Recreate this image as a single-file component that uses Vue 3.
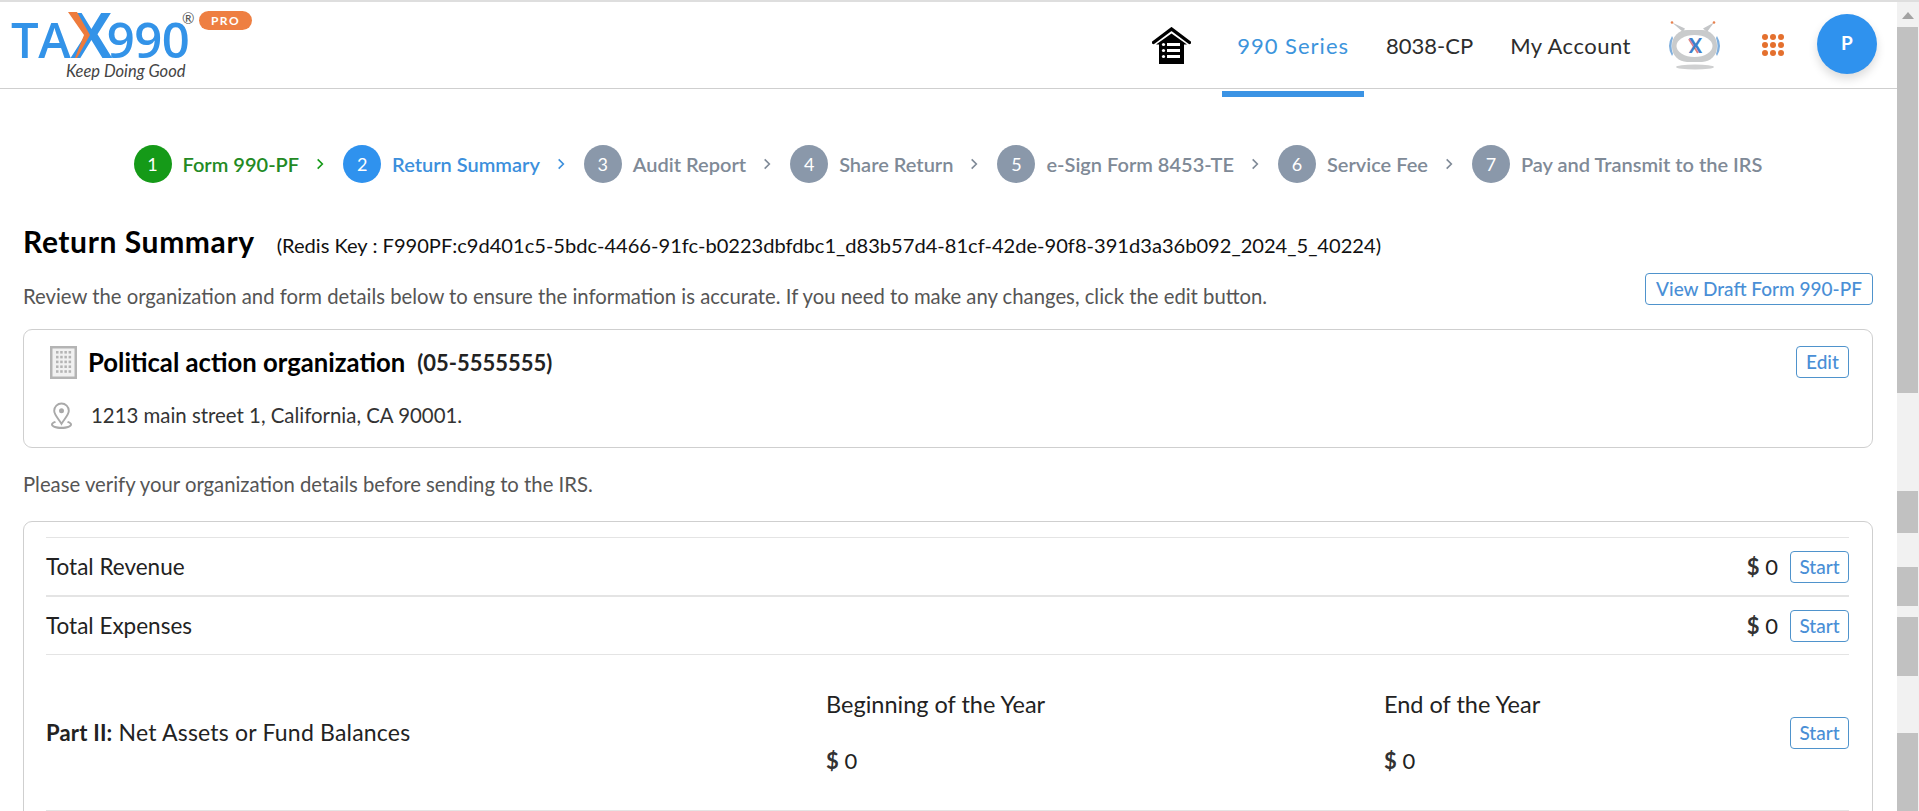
<script setup>
const steps = [
  { n: 1, label: 'Form 990-PF', state: 'done' },
  { n: 2, label: 'Return Summary', state: 'active' },
  { n: 3, label: 'Audit Report', state: 'todo' },
  { n: 4, label: 'Share Return', state: 'todo' },
  { n: 5, label: 'e-Sign Form 8453-TE', state: 'todo' },
  { n: 6, label: 'Service Fee', state: 'todo' },
  { n: 7, label: 'Pay and Transmit to the IRS', state: 'todo' }
]
const dots = Array.from({ length: 9 })
const cells = Array.from({ length: 20 })
</script>

<template>
  <div class="shell">
    <div class="page">
      <header class="header">
        <div class="logo">
          <div class="logo-mark">
            <span class="logo-text">TA</span><span class="logo-x">X</span><span class="logo-text">990</span>
            <svg class="logo-chevron" viewBox="0 0 22 46"><path d="M0 0h9l13 23L9 46H7l9-23z" fill="#ee7b3c" /></svg>
          </div>
          <span class="logo-reg">®</span>
          <span class="logo-pro">PRO</span>
          <span class="logo-tag">Keep Doing Good</span>
        </div>
        <nav class="nav">
          <svg class="home" viewBox="0 0 39 37">
            <path d="M1.500 15.500 19.500 2l18 13.500" fill="none" stroke="#000" stroke-width="3.400" stroke-linecap="round" />
            <path d="M4 17.500 19.500 6.500 35 17.500h-3V37H7V17.500z" fill="#000" />
            <g fill="#fff"><rect x="15" y="16" width="13" height="3" /><rect x="15" y="22" width="13" height="3" /><rect x="15" y="28" width="13" height="3" /><circle cx="11.500" cy="17.500" r="1.600" /><circle cx="11.500" cy="23.500" r="1.600" /><circle cx="11.500" cy="29.500" r="1.600" /></g>
          </svg>
          <a class="nav-item nav-active">990 Series</a>
          <a class="nav-item">8038-CP</a>
          <a class="nav-item nav-account">My Account</a>
          <svg class="robot" viewBox="0 0 54 49">
            <path d="M15 11 4 1.500l13 6zM39 11 46 1.500 35 7.500z" fill="#c4c6c8" />
            <circle cx="4" cy="1.500" r="1.300" fill="#e8814e" /><circle cx="46" cy="1.500" r="1.300" fill="#e8814e" />
            <path d="M4 15Q-2 25 4 35l1-2q-3-8 0-16zM49 15q6 10 0 20l-1-2q3-8 0-16z" fill="#7eaedd" />
            <rect x="4" y="9" width="45" height="32" rx="15" fill="#c9cbcc" />
            <ellipse cx="26.500" cy="25" rx="18" ry="11" fill="#fff" />
            <path d="M21 18 30 32" stroke="#e0837a" stroke-width="2" />
            <text x="27.500" y="32" text-anchor="middle" class="robot-x">X</text>
            <ellipse cx="27" cy="46" rx="19" ry="2.600" fill="#cfd0d1" />
          </svg>
          <div class="apps"><i v-for="(d, i) in dots" :key="i"></i></div>
          <div class="avatar">P</div>
        </nav>
      </header>

      <main class="main">
        <ol class="steps">
          <li v-for="(s, i) in steps" :key="s.n" class="step" :class="s.state">
            <span class="step-num">{{ s.n }}</span>
            <span class="step-label">{{ s.label }}</span>
            <svg v-if="i < steps.length - 1" class="step-sep" viewBox="0 0 8 12"><path d="m2 2 4 4-4 4" fill="none" stroke-width="1.400" /></svg>
          </li>
        </ol>

        <div class="title-row">
          <h1 class="title">Return Summary</h1>
          <span class="redis">(Redis Key : F990PF:c9d401c5-5bdc-4466-91fc-b0223dbfdbc1_d83b57d4-81cf-42de-90f8-391d3a36b092_2024_5_40224)</span>
        </div>

        <div class="intro-row">
          <p class="muted">Review the organization and form details below to ensure the information is accurate. If you need to make any changes, click the edit button.</p>
          <button class="btn btn-draft">View Draft Form 990-PF</button>
        </div>

        <section class="card org">
          <div class="org-main">
            <div class="org-name-row">
              <svg class="building" viewBox="0 0 27 33">
                <rect width="27" height="33" fill="#b4b4b4" />
                <rect x="2.500" y="2.500" width="22" height="28" fill="#f1f1f1" />
                <g fill="#b4b4b4"><rect v-for="(c, i) in cells" :key="i" :x="6 + (i % 4) * 4.200" :y="5 + Math.floor(i / 4) * 4.800" width="2.500" height="2.600" /></g>
              </svg>
              <h2 class="org-name">Political action organization</h2>
              <span class="org-ein">(05-5555555)</span>
            </div>
            <div class="org-addr-row">
              <svg class="pin" viewBox="0 0 23 27">
                <path d="M11.500 1.500a7.300 7.300 0 0 0-7.300 7.300c0 4 4.300 8 7.300 13 3-5 7.300-9 7.300-13a7.300 7.300 0 0 0-7.300-7.300z" fill="none" stroke="#a9a9a9" stroke-width="1.900" />
                <circle cx="11.500" cy="8.800" r="2.500" fill="#a9a9a9" />
                <path d="M5 19C2 20 1 21.300 1 22.500 1 25 5.500 27 11.500 27S22 25 22 22.500c0-1.200-1-2.500-4-3.500l-1 1.500c1.900.7 3 1.400 3 2 0 1-3.500 2.300-8.500 2.300S3 23.500 3 22.500c0-.6 1.100-1.300 3-2z" fill="#a9a9a9" />
              </svg>
              <span class="org-addr">1213 main street 1, California, CA 90001.</span>
            </div>
          </div>
          <button class="btn btn-edit">Edit</button>
        </section>

        <p class="muted verify">Please verify your organization details before sending to the IRS.</p>

        <section class="card summary">
          <div class="row">
            <span class="row-label">Total Revenue</span>
            <span class="amount"><b>$</b> 0</span>
            <button class="btn btn-start">Start</button>
          </div>
          <div class="row">
            <span class="row-label">Total Expenses</span>
            <span class="amount"><b>$</b> 0</span>
            <button class="btn btn-start">Start</button>
          </div>
          <div class="row row-part">
            <span class="part-label"><b>Part II:</b> Net Assets or Fund Balances</span>
            <div class="part-col part-begin">
              <span>Beginning of the Year</span>
              <span class="amount"><b>$</b> 0</span>
            </div>
            <div class="part-col part-end">
              <span>End of the Year</span>
              <span class="amount"><b>$</b> 0</span>
            </div>
            <button class="btn btn-start">Start</button>
          </div>
        </section>
      </main>
    </div>

    <aside class="scrollbar">
      <span class="sb-arrow"></span>
      <span class="thumb t1"></span>
      <span class="thumb t2"></span>
      <span class="thumb t3"></span>
      <span class="thumb t4"></span>
      <span class="thumb t5"></span>
    </aside>
  </div>
</template>

<style>
html, body { margin: 0; background: #fff; overflow: hidden; }
</style>

<style scoped>
* { box-sizing: border-box; }
.shell { display: flex; width: 1919px; height: 811px; overflow: hidden; border-top: 2px solid #dedede; font-family: Lato, "Noto Sans", sans-serif; color: #222; background: #fff; }
.page { width: 1897px; flex: none; overflow: hidden; }

.header { display: flex; justify-content: space-between; height: 87px; border-bottom: 1px solid #cfcfcf; }
.logo { position: relative; width: 260px; height: 86px; }
.logo-mark { position: absolute; left: 11px; top: 4px; white-space: nowrap; }
.logo-text { font-family: "Open Sans", sans-serif; font-size: 49px; line-height: 50px; letter-spacing: -.5px; font-weight: 600; color: #3393e8; }
.logo-x { font-family: "Liberation Sans", sans-serif; font-size: 64px; line-height: 60px; margin-right: -6px; font-weight: 700; color: #3393e8; }
.logo-chevron { position: absolute; left: 57px; top: 6px; width: 22px; height: 46px; }
.logo-reg { position: absolute; left: 182px; top: 9px; font-size: 15px; line-height: 15px; color: #555; }
.logo-pro { position: absolute; left: 199px; top: 9px; width: 53px; height: 19px; border-radius: 10px; background: #ee7f42; color: #fff; font-size: 12px; line-height: 19px; font-weight: 700; letter-spacing: 1.500px; text-align: center; }
.logo-tag { position: absolute; left: 66px; top: 62px; font-size: 16.500px; line-height: 14px; font-style: italic; color: #444; }

.nav { display: flex; align-items: center; }
.home { width: 39px; height: 37px; margin-right: 46px; margin-top: 1px; }
.nav-item { position: relative; font-size: 22px; line-height: 30px; color: #2d2d2d; margin-right: 37px; margin-top: 2px; }
.nav-active { color: #3c94dc; letter-spacing: 1px; }
.nav-account { letter-spacing: .5px; }
.nav-active::after { content: ""; position: absolute; left: -15px; right: -15px; top: 60px; height: 6px; background: #3b93e4; }
.robot { width: 54px; height: 49px; margin-right: 40px; }
.robot-x { font-family: Lato, sans-serif; font-size: 20px; font-weight: 700; fill: #3f7fc9; }
.apps { display: grid; grid-template-columns: repeat(3, 6px); gap: 2px; margin-right: 33px; }
.apps i { width: 6px; height: 6px; border-radius: 50%; background: #e4702e; }
.avatar { width: 60px; height: 60px; margin-right: 20px; margin-top: -2px; border-radius: 50%; background: #2f92ee; color: #fff; font-size: 19px; font-weight: 700; line-height: 58px; text-align: center; box-shadow: 0 5px 10px rgba(0,0,0,.14); }

.main { padding: 0 24px 0 23px; }
.steps { display: flex; justify-content: center; align-items: center; list-style: none; margin: 0; padding: 36px 0 0; height: 113px; }
.step { display: flex; align-items: center; }
.step-num { width: 38px; height: 38px; flex: none; border-radius: 50%; color: #fff; font-size: 18px; line-height: 38px; text-align: center; }
.step-label { margin-left: 11px; font-size: 20px; line-height: 28px; font-weight: 600; }
.step-sep { width: 10px; height: 14px; margin: 0 18px 0 16px; }
.done .step-num { background: #159a18; }
.done .step-label { color: #238a24; }
.done .step-sep { stroke: #159a18; }
.active .step-num { background: #2f92ee; }
.active .step-label { color: #3c8fdc; }
.active .step-sep { stroke: #3c8fdc; }
.todo .step-num { background: #8a98aa; }
.todo .step-label { color: #7f8a97; }
.todo .step-sep { stroke: #7f8a97; }

.title-row { display: flex; align-items: baseline; margin-top: 19px; height: 40px; }
.title { margin: 0; font-size: 30px; line-height: 40px; font-weight: 700; color: #000; letter-spacing: .6px; }
.redis { margin-left: 22px; font-size: 20.100px; line-height: 28px; color: #111; }

.intro-row { display: flex; justify-content: space-between; align-items: flex-start; margin-top: 12px; height: 56px; }
.muted { margin: 0; font-size: 20.300px; line-height: 28px; color: #555; }
.intro-row .muted { padding-top: 9px; }

.btn { background: #fff; border: 1px solid #4f93cc; border-radius: 4px; color: #4a8fd6; font-family: inherit; font-weight: 500; padding: 0; text-align: center; }
.btn-draft { width: 228px; height: 32px; font-size: 19px; line-height: 28px; }
.btn-edit { width: 53px; height: 32px; margin-top: 1px; font-size: 19px; line-height: 28px; }
.btn-start { width: 59px; height: 32px; font-size: 19px; line-height: 28px; flex: none; }

.card { border: 1px solid #cfcfcf; border-radius: 9px; }
.org { display: flex; justify-content: space-between; align-items: flex-start; height: 119px; padding: 15px 23px 0 26px; }
.org-name-row { display: flex; align-items: center; height: 33px; margin-top: 1px; }
.building { width: 27px; height: 33px; }
.org-name { margin: 0 0 0 11px; font-size: 25.700px; line-height: 33px; font-weight: 700; color: #000; }
.org-ein { margin-left: 12px; font-size: 22px; line-height: 33px; font-weight: 700; color: #222; }
.org-addr-row { display: flex; align-items: center; margin-top: 22px; }
.pin { width: 23px; height: 27px; flex: none; }
.org-addr { margin-left: 18px; font-size: 20.400px; line-height: 28px; color: #333; }

.verify { margin-top: 22px; height: 51px; }

.summary { height: 340px; padding: 15px 23px 0 22px; }
.row { display: flex; align-items: center; height: 58px; border-top: 1px solid #e4e4e4; }
.row + .row { height: 59px; border-top-width: 2px; }
.row + .row + .row { border-top-width: 1px; }
.row-label { flex: 1; font-size: 22.500px; line-height: 30px; color: #222; }
.amount { font-size: 22px; line-height: 30px; color: #222; margin-right: 12px; }
.amount b { font-weight: 700; color: #333; }
.row + .row.row-part { height: 158px; border-bottom: 2px solid #e4e4e4; }
.part-label { width: 780px; flex: none; font-size: 23px; line-height: 30px; letter-spacing: .2px; }
.part-label b { font-weight: 700; font-size: 22px; }
.part-col { display: flex; flex-direction: column; gap: 27px; font-size: 23.500px; line-height: 30px; margin-bottom: 0; }
.part-begin { width: 558px; flex: none; }
.part-end { flex: 1; }

.scrollbar { flex: 1; display: flex; flex-direction: column; background: #f1f1f1; align-items: stretch; }
.sb-arrow { width: 0; height: 0; margin: 10px auto 8px; border: 6px solid transparent; border-top-width: 0; border-bottom: 7px solid #a3a3a3; }
.thumb { display: block; background: #c1c1c1; flex: none; margin-right: 1px; }
.t1 { height: 366px; }
.t2 { margin-top: 98px; height: 42px; }
.t3 { margin-top: 34px; height: 39px; }
.t4 { margin-top: 11px; height: 59px; }
.t5 { margin-top: 57px; height: 78px; }
</style>
